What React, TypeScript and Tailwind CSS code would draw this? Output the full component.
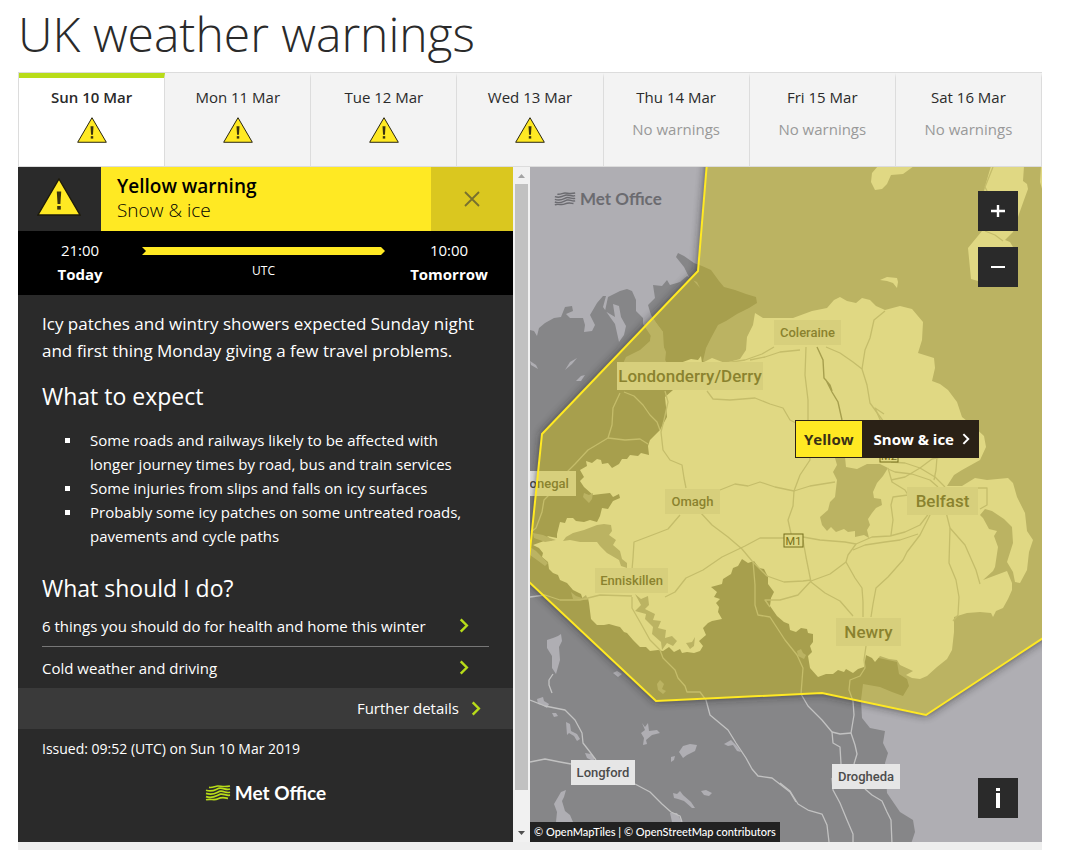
import { useState } from 'react'

type Day = {
  label: string
  warning: boolean
}

type Place = {
  name: string
  x: number
  y: number
  w: number
  h: number
  size: number
}

const days: Day[] = [
  { label: 'Sun 10 Mar', warning: true },
  { label: 'Mon 11 Mar', warning: true },
  { label: 'Tue 12 Mar', warning: true },
  { label: 'Wed 13 Mar', warning: true },
  { label: 'Thu 14 Mar', warning: false },
  { label: 'Fri 15 Mar', warning: false },
  { label: 'Sat 16 Mar', warning: false },
]

const expectations = [
  'Some roads and railways likely to be affected with longer journey times by road, bus and train services',
  'Some injuries from slips and falls on icy surfaces',
  'Probably some icy patches on some untreated roads, pavements and cycle paths',
]

const advice = ['6 things you should do for health and home this winter', 'Cold weather and driving']

const places: Place[] = [
  { name: 'Coleraine', x: 774, y: 320, w: 67, h: 25, size: 13 },
  { name: 'Londonderry/Derry', x: 617, y: 362, w: 146, h: 28, size: 17 },
  { name: 'Donegal', x: 514, y: 471, w: 62, h: 25, size: 13 },
  { name: 'Omagh', x: 665, y: 489, w: 55, h: 25, size: 13 },
  { name: 'Belfast', x: 907, y: 487, w: 71, h: 28, size: 17 },
  { name: 'Enniskillen', x: 595, y: 568, w: 73, h: 25, size: 13 },
  { name: 'Newry', x: 836, y: 618, w: 65, h: 28, size: 17 },
  { name: 'Longford', x: 571, y: 760, w: 64, h: 25, size: 13 },
  { name: 'Drogheda', x: 832, y: 764, w: 68, h: 25, size: 13 },
]

const irelandPath =
  'M530 330 L534 331 L537 336 L539 328 L545 323 L554 318 L561 317 L565 307 L572 306 L573 311 L566 314 L570 318 L583 318 L585 325 L584 332 L592 331 L595 325 L590 315 L597 303 L603 296 L606 296 L603 307 L610 317 L615 324 L619 342 L624 335 L626 326 L621 317 L619 306 L613 304 L615 317 L605 311 L608 297 L620 291 L627 289 L632 291 L636 300 L636 311 L643 318 L643 324 L651 336 L650 341 L640 350 L626 357 L620 370 L672 370 L665 360 L664 349 L663 332 L657 324 L651 315 L648 305 L655 298 L653 285 L662 286 L667 280 L670 285 L680 282 L687 276 L692 279 L700 288 L697 282 L690 279 L684 267 L676 257 L678 253 L684 256 L694 263 L702 266 L711 270 L719 281 L724 287 L735 290 L746 294 L756 297 L757 303 L749 308 L737 314 L726 321 L718 325 L711 338 L706 348 L703 361 L800 480 L865 655 L897 662 L899 674 L907 679 L909 686 L903 696 L892 692 L880 687 L863 684 L861 700 L862 718 L870 728 L885 731 L883 743 L888 753 L885 763 L887 793 L900 812 L913 820 L915 832 L911 844 L530 844 Z'

const northernIrelandPath =
  'M673 390 L665 397 L666 407 L667 417 L660 430 L650 440 L648 446 L649 455 L641 453 L638 456 L630 455 L627 459 L622 459 L619 464 L612 468 L608 463 L602 464 L601 460 L597 459 L592 463 L586 461 L587 466 L580 470 L584 477 L580 481 L584 487 L593 495 L601 494 L610 493 L613 497 L619 494 L620 498 L613 501 L608 509 L602 508 L600 516 L597 522 L590 520 L584 522 L576 521 L573 518 L567 518 L565 523 L560 522 L557 534 L557 538 L547 536 L552 541 L544 541 L533 545 L539 548 L543 553 L542 557 L548 562 L549 569 L553 573 L558 575 L560 580 L567 583 L573 590 L581 594 L583 600 L588 598 L589 603 L591 619 L597 625 L604 625 L609 624 L616 626 L620 627 L624 632 L627 633 L633 640 L640 647 L646 647 L650 651 L658 650 L663 651 L669 647 L674 652 L680 649 L682 653 L687 652 L694 653 L700 651 L703 646 L699 641 L706 635 L703 628 L708 623 L712 621 L722 619 L718 612 L719 607 L716 603 L720 599 L714 597 L717 592 L711 587 L722 584 L723 579 L731 574 L733 568 L738 566 L742 559 L748 563 L754 561 L759 568 L764 569 L768 577 L768 584 L774 592 L771 598 L770 606 L777 616 L784 622 L789 624 L790 630 L796 632 L801 628 L807 629 L808 633 L813 634 L813 642 L810 646 L812 652 L808 656 L810 668 L818 677 L826 674 L833 674 L838 670 L844 672 L846 669 L853 673 L858 669 L864 667 L866 655 L872 658 L875 662 L880 656 L889 659 L897 660 L900 665 L913 671 L906 675 L912 678 L920 679 L927 676 L937 667 L947 659 L952 650 L954 632 L954 617 L967 613 L980 612 L991 613 L993 617 L996 611 L1003 608 L1008 599 L1012 590 L1012 583 L1007 571 L983 580 L993 571 L995 567 L998 547 L994 536 L997 531 L989 529 L983 518 L980 515 L985 509 L992 511 L1004 519 L1012 527 L1013 543 L1007 562 L1013 572 L1015 582 L1020 583 L1027 570 L1029 552 L1033 540 L1027 531 L1025 513 L1017 497 L1013 483 L1008 478 L987 480 L975 478 L962 486 L947 486 L954 475 L962 470 L980 460 L986 447 L984 436 L972 425 L962 417 L957 402 L948 390 L940 384 L932 381 L935 368 L934 358 L918 353 L922 340 L923 322 L912 309 L900 306 L885 310 L876 306 L870 300 L862 298 L856 303 L847 301 L840 297 L834 300 L827 308 L812 311 L793 318 L780 318 L763 318 L755 313 L753 325 L747 337 L746 350 L740 359 L725 363 L712 358 L702 363 L701 356 L698 360 L691 359 L680 363 Z'

const waterPaths = [
  // Lough Neagh
  'M835 458 L837 465 L833 472 L837 480 L835 497 L830 502 L828 510 L820 517 L822 525 L827 531 L831 527 L836 532 L844 529 L848 532 L855 531 L855 537 L864 535 L869 538 L867 530 L870 525 L868 519 L872 513 L876 508 L882 505 L881 499 L874 498 L873 492 L877 483 L883 476 L888 468 L880 464 L867 464 L857 469 L846 467 L845 457 Z',
  // Lower Lough Erne
  'M563 541 L566 537 L573 533 L584 530 L597 525 L604 524 L611 525 L612 531 L609 535 L616 540 L613 545 L620 551 L622 559 L627 563 L627 568 L621 566 L619 560 L607 553 L600 546 L597 542 L580 542 L570 540 Z',
  // Upper Lough Erne
  'M635 594 L641 599 L648 596 L649 605 L645 609 L655 614 L653 620 L661 621 L658 628 L666 630 L665 638 L672 636 L677 641 L673 646 L667 643 L662 650 L661 642 L652 634 L653 627 L645 619 L646 614 L635 611 L641 605 Z',
  'M686 643 L692 642 L695 637 L694 646 L690 649 Z',
  'M547 640 L553 638 L558 636 L561 634 L562 641 L559 647 L560 660 L556 674 L552 668 L552 656 L547 648 Z',
  'M613 673 L617 671 L622 674 L618 677 Z',
  'M657 684 L660 680 L664 684 L662 689 L666 691 L663 694 L658 690 Z',
  'M642 723 L645 727 L648 723 L649 731 L657 730 L660 733 L652 735 L646 740 L647 744 L643 745 L644 738 L641 733 L645 730 Z',
  'M679 752 L683 746 L690 744 L697 745 L695 751 L687 755 L683 758 Z',
  'M671 757 L675 756 L674 760 L671 762 Z',
  'M673 793 L677 794 L680 791 L683 795 L691 802 L695 808 L692 808 L684 801 L678 799 L674 798 Z',
  'M701 791 L706 790 L712 793 L709 796 L704 795 Z',
  'M724 744 L731 740 L737 746 L741 752 L737 751 L733 745 L728 746 Z',
  'M537 699 L543 697 L544 701 L549 704 L547 708 L542 705 L538 704 Z',
  'M566 722 L570 724 L571 731 L577 734 L580 739 L577 741 L574 736 L569 733 L567 735 Z',
  'M552 713 L556 713 L558 716 L554 717 Z',
  'M585 753 L591 754 L595 758 L593 761 L587 758 Z',
  'M561 792 L566 790 L564 797 L562 801 L565 811 L570 815 L573 822 L556 822 L557 812 L554 804 Z',
  'M670 813 L677 813 L682 822 L672 822 Z',
  'M565 370 L570 362 L577 358 L572 364 Z',
  'M576 381 L581 376 L585 375 L581 381 Z',
  'M530 361 L536 365 L538 369 L531 365 Z',
  'M584 493 L589 495 L593 493 L592 499 L589 503 L583 497 Z',
  'M530 547 L536 551 L541 556 L548 563 L545 566 L537 560 L530 555 Z',
  'M533 533 L543 535 L550 538 L556 540 L545 542 L534 538 Z',
  'M797 651 L801 649 L803 653 L806 655 L804 659 L798 656 Z',
  'M571 592 L576 596 L582 598 L586 595 L588 600 L579 600 L573 599 Z',
  // Lough Swilly
  'M651 316 L657 324 L663 332 L663 345 L666 352 L665 362 L628 362 L632 357 L643 350 L650 342 L651 334 L644 324 Z',
]

const scotlandPaths = [
  'M878 166 L872 173 L871 182 L875 190 L882 189 L887 184 L891 175 L903 174 L914 166 Z',
  'M991 166 L986 183 L982 200 L982 231 L968 248 L971 279 L978 281 L1006 281 L1013 247 L1010 242 L1005 240 L1013 232 L1019 214 L1024 200 L1028 189 L1027 184 L1023 181 L1024 166 Z',
  'M1044 166 L1041 166 L1040 182 L1043 192 Z',
  'M880 280 L887 277 L897 278 L898 282 L897 288 L893 283 L887 281 Z',
]

const roadPaths = [
  'M665 391 L668 402 L664 420 L661 432 L663 450 L670 460 L682 465 L684 478 L686 488',
  'M624 392 L634 396 L643 405 L650 415 L657 422 L660 430',
  'M620 393 L613 408 L612 425 L608 438 L588 450 L575 464 L564 475 L556 488 L544 500 L542 512 L536 528 L531 532',
  'M608 438 L625 440 L640 439 L648 444',
  'M707 391 L713 399 L730 400 L755 398 L770 404 L783 408 L790 420 L796 423',
  'M720 490 L735 484 L748 486 L760 482 L775 487 L794 491 L810 486 L835 482',
  'M794 491 L793 506 L788 520 L792 538',
  'M700 512 L712 525 L728 537 L742 549 L752 561 L767 576 L784 582 L803 581 L811 580',
  'M680 515 L668 529 L655 534 L634 542 L633 558 L632 570',
  'M665 597 L675 592 L686 578 L703 570 L722 557 L745 546 L760 538 L784 538',
  'M530 597 L545 595 L560 600 L580 600 L600 595 L632 596',
  'M803 537 L820 540 L845 542 L856 544 L872 537 L890 536 L905 532 L920 525 L930 512',
  'M853 550 L865 545 L885 542 L900 540 L918 534',
  'M931 513 L920 535 L907 552 L903 560 L888 577 L876 588 L873 604 L871 617',
  'M856 544 L848 555 L846 562 L855 578 L862 588 L863 602 L863 617',
  'M846 562 L830 574 L811 581 L798 595 L780 600 L765 600 L770 607',
  'M803 540 L806 557 L809 572 L811 582 L825 593 L840 601 L853 616',
  'M946 512 L950 528 L949 563 L956 580 L959 597 L958 615 L953 621',
  'M950 528 L965 545 L976 570 L980 584',
  'M806 347 L805 375 L808 400 L808 430 L810 460 L800 475 L794 491',
  'M774 347 L762 354 L745 360 L725 363',
  'M800 350 L780 352 L765 357 L750 360',
  'M826 347 L840 353 L853 362 L862 369 L867 385 L870 403 L878 414 L884 422',
  'M885 311 L874 320 L870 338 L865 350 L862 369',
  'M884 414 L875 408 L882 424',
  'M891 462 L905 463 L920 468 L935 477 L945 487',
  'M888 469 L895 472 L912 474 L930 480 L938 487',
  'M888 468 L892 482 L905 490 L908 495 L893 497 L891 505 L893 520 L891 535',
  'M891 480 L905 477 L920 468 L932 459 L941 457',
  'M937 457 L936 470 L934 480',
  'M978 488 L987 488 L987 505 L980 509',
  'M753 561 L755 585 L755 605 L758 615 L770 617 L785 640 L797 655 L803 668 L801 694 L808 706 L822 720 L832 732 L833 743 L840 747 L841 764',
  'M866 646 L864 660 L865 668 L860 676 L850 680 L849 690 L853 701 L854 715 L851 733 L855 745 L857 754 L854 764',
  'M832 732 L840 734 L851 733',
  'M832 778 L833 790 L840 803 L847 820 L853 834 L853 844',
  'M865 789 L872 795 L882 801 L887 812 L891 820 L892 844',
  'M780 783 L790 791 L798 804 L808 810 L822 814 L827 825 L829 842',
  'M632 597 L632 608 L640 622 L650 640 L660 650 L663 658 L675 670 L678 678 L685 686 L687 692 L700 692 L706 700 L710 715 L728 730 L736 743 L746 758 L752 769 L758 776 L772 778 L790 792 L796 802',
  'M530 700 L545 706 L565 710 L575 720 L582 733 L583 743 L590 752 L596 760',
  'M530 762 L545 759 L560 762 L571 764',
  'M635 784 L650 792 L662 804 L671 812 L680 816 L682 822',
  'M553 674 L549 680 L549 685 L552 693',
  'M988 193 L985 187 L993 167',
  'M985 231 L995 235 L1003 241',
]

const WarningIcon = ({ className }: { className: string }) => (
  <svg viewBox="0 0 44 38" className={className} aria-hidden="true">
    <path d="M22 1 L43 37 H1 Z" fill="#ffe923" stroke="#1d1a0b" strokeWidth="1.4" />
    <path d="M19.8 13.5 H24.2 L23.4 26 H20.6 Z" fill="#3a3310" />
    <rect x="20.2" y="28" width="3.6" height="3.6" fill="#3a3310" />
  </svg>
)

const Chevron = ({ className }: { className: string }) => (
  <svg viewBox="0 0 10 16" className={className} fill="none" stroke="currentColor" strokeWidth="2.6" aria-hidden="true">
    <path d="M1.5 1.5 L8 8 L1.5 14.5" />
  </svg>
)

const Waves = ({ className }: { className: string }) => (
  <svg viewBox="0 0 26 16" className={className} fill="none" stroke="currentColor" strokeWidth="1.7" aria-hidden="true">
    <path d="M4 2.4 C8 3 10 1 13 1 S19 2.2 25 1" />
    <path d="M1 5.2 C9 7.6 11 3.4 15 3.2 S21 5.4 25 4" />
    <path d="M1 8.4 C10 11.2 12 6.2 16 6.2 S21 8.4 25 7.2" />
    <path d="M1 11.6 C8 14.2 12 10 15.5 9.2 S21 11 25 10.2" />
    <path d="M1 14.8 C6 13.4 9 15.8 13 13.8 S19 12.6 23 13.4" />
  </svg>
)

function DayTabs({ active, onSelect }: { active: number; onSelect: (index: number) => void }) {
  return (
    <div role="tablist" className="flex border-y border-l border-[#dcdcdc]">
      {days.map((day, index) => (
        <button
          key={day.label}
          role="tab"
          aria-selected={active === index}
          onClick={() => onSelect(index)}
          className={`flex h-[93px] flex-1 flex-col items-center border-t-[5px] border-r border-r-[#dcdcdc] pt-[7px] text-[15px] leading-6 ${
            active === index ? 'border-t-[#b8dc19] bg-white font-semibold' : 'border-t-[#f3f3f3] bg-[#f3f3f3]'
          }`}
        >
          <span>{day.label}</span>
          {day.warning ? (
            <WarningIcon className="mt-2 h-[26px] w-[30px]" />
          ) : (
            <span className="mt-2 text-[#999]">No warnings</span>
          )}
        </button>
      ))}
    </div>
  )
}

function WarningPanel() {
  return (
    <section className="min-w-0 flex-1 bg-[#2a2a2a] text-white">
      <header className="flex h-16">
        <div className="flex w-[83px] justify-center pt-[11px] pr-0.5">
          <WarningIcon className="h-[38px] w-[44px]" />
        </div>
        <div className="flex-1 bg-[#ffe923] px-4 pt-[7px] text-black">
          <h2 className="text-[19px] leading-6 font-semibold">Yellow warning</h2>
          <p className="text-[19px] leading-6 font-light">Snow &amp; ice</p>
        </div>
        <button aria-label="Close" className="flex w-[82px] items-center justify-center bg-[#dac71f] text-[#77702f]">
          <svg viewBox="0 0 16 16" className="h-4 w-4" fill="none" stroke="currentColor" strokeWidth="1.8">
            <path d="M1 1 L15 15 M15 1 L1 15" />
          </svg>
        </button>
      </header>

      <div className="flex h-16 bg-black pt-[7px] text-center text-[15px] leading-6">
        <div className="w-[124px]">
          <p>21:00</p>
          <p className="font-bold">Today</p>
        </div>
        <div className="flex-1 pt-[9px]">
          <svg viewBox="0 0 243 8" preserveAspectRatio="none" className="h-2 w-full" aria-hidden="true">
            <path d="M0 0 H239 L243 4 L239 8 H0 L4 4 Z" fill="#ffe923" />
          </svg>
          <p className="mt-1 text-xs leading-6">UTC</p>
        </div>
        <div className="w-[128px]">
          <p>10:00</p>
          <p className="font-bold">Tomorrow</p>
        </div>
      </div>

      <div className="px-6 pt-[15px]">
        <p className="text-[17px] leading-[27px]">
          Icy patches and wintry showers expected Sunday night and first thing Monday giving a few travel problems.
        </p>
        <h3 className="mt-4 text-[23px] leading-8 font-medium">What to expect</h3>
        <ul className="mt-4 pr-5 text-[15px] leading-6">
          {expectations.map(item => (
            <li key={item} className="flex">
              <span className="mt-2.5 ml-[23px] h-[5px] w-[5px] shrink-0 bg-white" />
              <span className="ml-5">{item}</span>
            </li>
          ))}
        </ul>
        <h3 className="mt-6 text-[23px] leading-8 font-medium">What should I do?</h3>
        <ul className="pt-px text-[15px] leading-6">
          {advice.map((item, index) => (
            <li key={item} className={index > 0 ? 'border-t border-[#777]' : ''}>
              <a href="#" className="flex h-[41px] items-center justify-between pr-5">
                {item}
                <Chevron className="h-[15px] w-[10px] text-[#b8dc19]" />
              </a>
            </li>
          ))}
        </ul>
      </div>
      <a href="#" className="flex h-[41px] items-center justify-end gap-3 bg-[#3a3a3a] pr-8 text-[15px]">
        Further details
        <Chevron className="h-[15px] w-[10px] text-[#b8dc19]" />
      </a>
      <p className="px-6 pt-2 text-sm leading-6">Issued: 09:52 (UTC) on Sun 10 Mar 2019</p>
      <div className="flex items-center justify-center gap-1 pt-5 pb-[37px] font-[Lato,sans-serif] text-[19px] leading-6 font-bold">
        <Waves className="h-4 w-[26px] text-[#b8dc19]" />
        Met Office
      </div>
    </section>
  )
}

function ScrollRail() {
  return (
    <div className="flex w-[17px] flex-col items-center bg-[#f1f1f1]" aria-hidden="true">
      <svg viewBox="0 0 17 17" className="h-[17px] w-[17px]">
        <path d="M5 11 L8.5 7 L12 11 Z" fill="#a3a3a3" />
      </svg>
      <div className="w-[13px] flex-1 bg-[#c1c1c1]" />
      <div className="h-[35px]" />
      <svg viewBox="0 0 17 17" className="h-[17px] w-[17px]">
        <path d="M5 6 L8.5 10 L12 6 Z" fill="#505050" />
      </svg>
    </div>
  )
}

function WarningMap() {
  const area = '708,150 698,271 542,434 529,560 527,580 656,701 822,693 926,715 1060,627 1060,150'

  return (
    <section className="relative min-w-0 flex-1 overflow-hidden bg-[#afaeb3]">
      <svg
        viewBox="530 167 512 675"
        preserveAspectRatio="xMidYMid slice"
        className="absolute inset-0 h-full w-full font-[Roboto,sans-serif]"
      >
        <defs>
          <filter id="area-shadow" x="-10%" y="-10%" width="120%" height="120%">
            <feGaussianBlur stdDeviation="5" />
          </filter>
          <mask id="outside-area">
            <rect x="500" y="140" width="600" height="740" fill="#fff" />
            <polygon points={area} fill="#000" />
          </mask>
        </defs>
        <path d={irelandPath} fill="#868688" />
        <path d={northernIrelandPath} fill="#f8f9f5" />
        {scotlandPaths.map(d => (
          <path key={d} d={d} fill="#f8f9f5" />
        ))}
        {waterPaths.map(d => (
          <path key={d} d={d} fill="#afaeb3" />
        ))}
        <g fill="none" stroke="#c2c2c2" strokeWidth="1.3" strokeLinejoin="round">
          {roadPaths.map(d => (
            <path key={d} d={d} />
          ))}
        </g>
        <path
          d="M817 347 L823 360 L824 378 L830 385 L832 391 M826 380 L832 392 L838 402 L842 420"
          fill="none"
          stroke="#868688"
          strokeWidth="1.4"
        />
        {places.map(place => (
          <g key={place.name}>
            <rect x={place.x} y={place.y} width={place.w} height={place.h} fill="#e6e6e6" />
            <text
              x={place.x + place.w / 2}
              y={place.y + place.h / 2}
              dominantBaseline="central"
              textAnchor="middle"
              fontSize={place.size}
              fontWeight="500"
              fill="#4c4c4c"
            >
              {place.name}
            </text>
          </g>
        ))}
        <g fontSize="11" textAnchor="middle">
          <rect x="784" y="534" width="19" height="13" fill="#f8f9f5" stroke="#222" />
          <text x="793.5" y="545" fill="#222">
            M1
          </text>
          <rect x="880" y="449" width="18" height="13" fill="#f8f9f5" stroke="#222" />
          <text x="889" y="460" fill="#222">
            M2
          </text>
        </g>
        <g mask="url(#outside-area)">
          <polygon points={area} fill="#222" opacity="0.8" filter="url(#area-shadow)" />
        </g>
        <polygon points={area} fill="#c7b811" fillOpacity="0.5" stroke="none" />
        <polygon points={area} fill="none" stroke="#ffe923" strokeWidth="2" />
      </svg>

      <div className="absolute top-5 left-6 flex items-center gap-1 font-[Lato,sans-serif] text-[17px] leading-6 font-bold text-[#6b6b70]">
        <Waves className="h-3.5 w-[22px]" />
        Met Office
      </div>

      <div className="absolute top-6 right-6 flex flex-col gap-4">
        <button aria-label="Zoom in" className="flex h-10 w-10 items-center justify-center bg-[#2a2a2a]">
          <svg viewBox="0 0 14 14" className="h-3.5 w-3.5" stroke="#fff" strokeWidth="2.4">
            <path d="M0 7 H14 M7 1 V13" />
          </svg>
        </button>
        <button aria-label="Zoom out" className="flex h-10 w-10 items-center justify-center bg-[#2a2a2a]">
          <svg viewBox="0 0 14 14" className="h-3.5 w-3.5" stroke="#fff" strokeWidth="2">
            <path d="M0 7 H14" />
          </svg>
        </button>
      </div>

      <button className="absolute top-[253px] left-[265px] flex h-[38px] border border-[#2a2116] text-[15px] leading-9 font-bold">
        <span className="bg-[#ffe923] px-2 text-[#3a3016]">Yellow</span>
        <span className="flex items-center gap-2 bg-[#2a2116] pr-2 pl-3 text-white">
          Snow &amp; ice
          <Chevron className="h-3 w-2" />
        </span>
      </button>

      <button
        aria-label="Map information"
        className="absolute right-6 bottom-6 flex h-10 w-10 items-center justify-center bg-[#2a2a2a]"
      >
        <svg viewBox="0 0 4 20" className="h-5 w-1" fill="#fff">
          <path d="M0 0 H4 V3 H0 Z M0 5 H4 V20 H0 Z" />
        </svg>
      </button>

      <p className="absolute bottom-0 left-0 bg-[#222] px-1 font-[Lato,sans-serif] text-[11px] leading-5 font-medium text-white">
        © <a href="#">OpenMapTiles</a> | © <a href="#">OpenStreetMap</a> contributors
      </p>
    </section>
  )
}

export default function App() {
  const [activeDay, setActiveDay] = useState(0)

  return (
    <main className="bg-white pr-[34px] pl-[18px] font-['Open_Sans','Noto_Sans',sans-serif] text-[#2a2a2a]">
      <h1 className="pt-0.5 pb-1.5 text-5xl leading-[64px] font-light">UK weather warnings</h1>
      <DayTabs active={activeDay} onSelect={setActiveDay} />
      <div className="flex">
        <div className="flex min-w-0 flex-1">
          <WarningPanel />
          <ScrollRail />
        </div>
        <WarningMap />
      </div>
      <div className="h-2 bg-[#eee]" />
    </main>
  )
}
